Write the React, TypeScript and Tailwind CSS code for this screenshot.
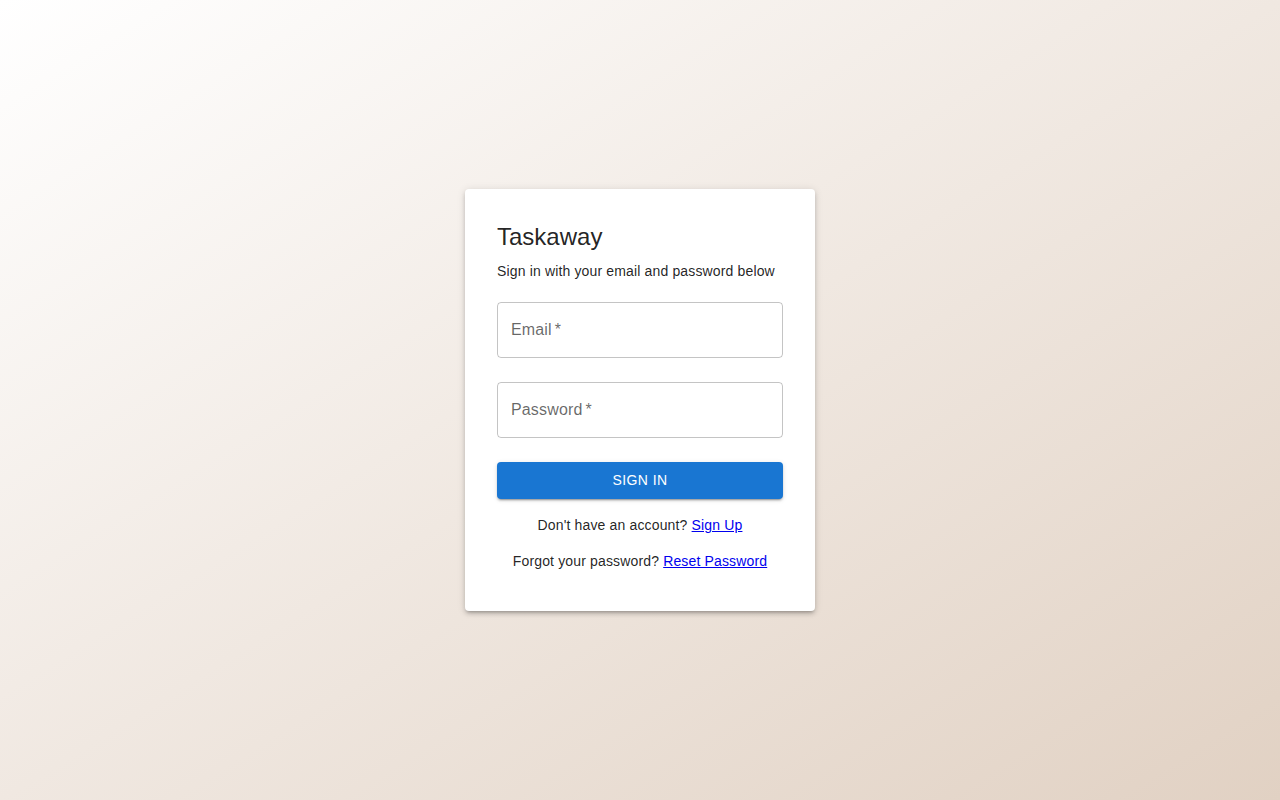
export default function App() {
  return (
    <div className="min-h-screen w-full flex items-center justify-center bg-[linear-gradient(to_bottom_right,#ffffff,#e1d1c3)] font-['Liberation_Sans',Arial,sans-serif] text-[rgba(0,0,0,0.87)]">
      <div className="w-[350px] bg-white rounded-[4px] px-8 pt-8 pb-10 shadow-[0px_3px_3px_-2px_rgba(0,0,0,0.2),0px_3px_4px_0px_rgba(0,0,0,0.14),0px_1px_8px_0px_rgba(0,0,0,0.12)]">
        <h1 className="text-[24px] leading-[32px] font-normal">Taskaway</h1>
        <p className="mt-2 text-[14px] leading-[20px] tracking-[0.01071em]">
          Sign in with your email and password below
        </p>

        <form className="mt-[21px] flex flex-col gap-6">
          <div className="h-14 rounded-[4px] border border-[rgba(0,0,0,0.23)] flex items-center px-[13px] text-[16px] text-[rgba(0,0,0,0.6)] tracking-[0.00938em]">
            Email<span className="ml-[3px]">*</span>
          </div>
          <div className="h-14 rounded-[4px] border border-[rgba(0,0,0,0.23)] flex items-center px-[13px] text-[16px] text-[rgba(0,0,0,0.6)] tracking-[0.00938em]">
            Password<span className="ml-[3px]">*</span>
          </div>
          <button
            type="button"
            className="h-[37px] rounded-[4px] bg-[#1976d2] text-white text-[14px] font-medium uppercase tracking-[0.02857em] shadow-[0px_3px_1px_-2px_rgba(0,0,0,0.2),0px_2px_2px_0px_rgba(0,0,0,0.14),0px_1px_5px_0px_rgba(0,0,0,0.12)]"
          >
            Sign In
          </button>
        </form>

        <p className="mt-4 text-center text-[14px] leading-[20px] tracking-[0.01071em]">
          Don't have an account?{" "}
          <a href="#" className="text-[#0000ee] underline">
            Sign Up
          </a>
        </p>
        <p className="mt-4 text-center text-[14px] leading-[20px] tracking-[0.01071em]">
          Forgot your password?{" "}
          <a href="#" className="text-[#0000ee] underline">
            Reset Password
          </a>
        </p>
      </div>
    </div>
  );
}
